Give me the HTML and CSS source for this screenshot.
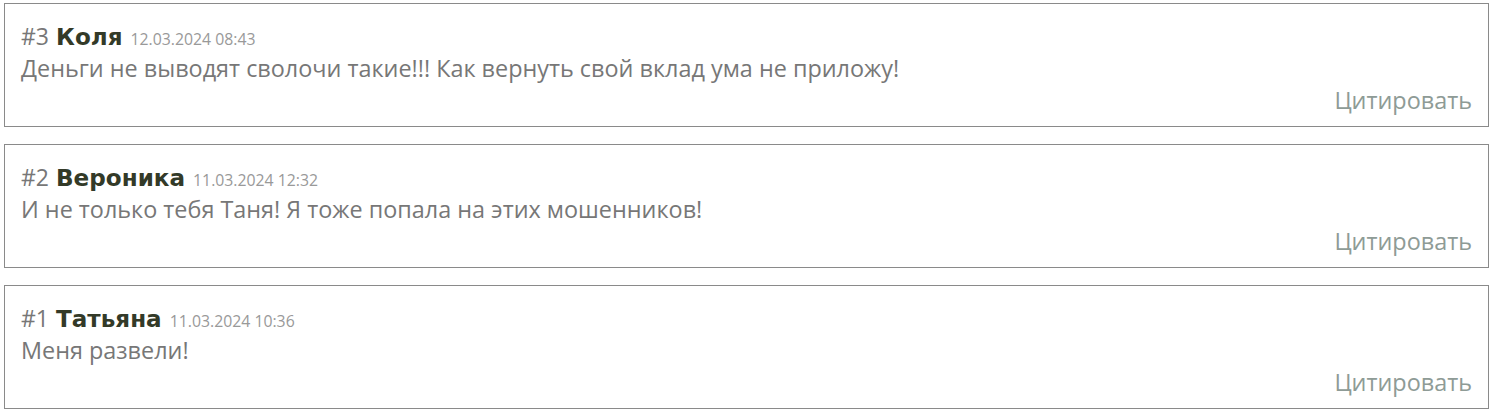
FILE: index.html
```html
<!DOCTYPE html>
<html lang="ru">
<head>
<meta charset="utf-8">
<link rel="stylesheet" href="styles.css">
</head>
<body>
<div class="list">
  <div class="comment">
    <div class="head"><span class="num">#3</span><span class="name">Коля</span><span class="date">12.03.2024 08:43</span></div>
    <div class="text">Деньги не выводят сволочи такие!!! Как вернуть свой вклад ума не приложу!</div>
    <div class="foot"><span class="quote">Цитировать</span></div>
  </div>
  <div class="comment">
    <div class="head"><span class="num">#2</span><span class="name">Вероника</span><span class="date">11.03.2024 12:32</span></div>
    <div class="text">И не только тебя Таня! Я тоже попала на этих мошенников!</div>
    <div class="foot"><span class="quote">Цитировать</span></div>
  </div>
  <div class="comment">
    <div class="head"><span class="num">#1</span><span class="name">Татьяна</span><span class="date">11.03.2024 10:36</span></div>
    <div class="text">Меня развели!</div>
    <div class="foot"><span class="quote">Цитировать</span></div>
  </div>
</div>
</body>
</html>
```
FILE: styles.css
```css
html, body {
  margin: 0;
  padding: 0;
  background: #fff;
}
body {
  font-family: "Open Sans", "Liberation Sans", sans-serif;
  color: #777;
}
.list {
  padding: 3px 6px 0 4px;
  display: flex;
  flex-direction: column;
  gap: 17px;
}
.comment {
  border: 1px solid #8a8a8a;
  padding: 16px 16px 10px 16px;
}
.head, .text, .foot {
  height: 32px;
  line-height: 32px;
  white-space: nowrap;
}
.head {
  display: flex;
  align-items: baseline;
  gap: 8px;
}
.num {
  font-size: 23px;
  color: #777;
}
.name {
  font-family: "DejaVu Sans", sans-serif;
  font-weight: bold;
  font-size: 23.1px;
  color: #333a28;
  margin-left: -1px;
}
.date {
  font-size: 15.8px;
  color: #999;
}
.text {
  font-size: 23.4px;
  color: #777;
}
.foot {
  text-align: right;
}
.quote {
  font-size: 23.4px;
  color: #8e9b96;
}
```
